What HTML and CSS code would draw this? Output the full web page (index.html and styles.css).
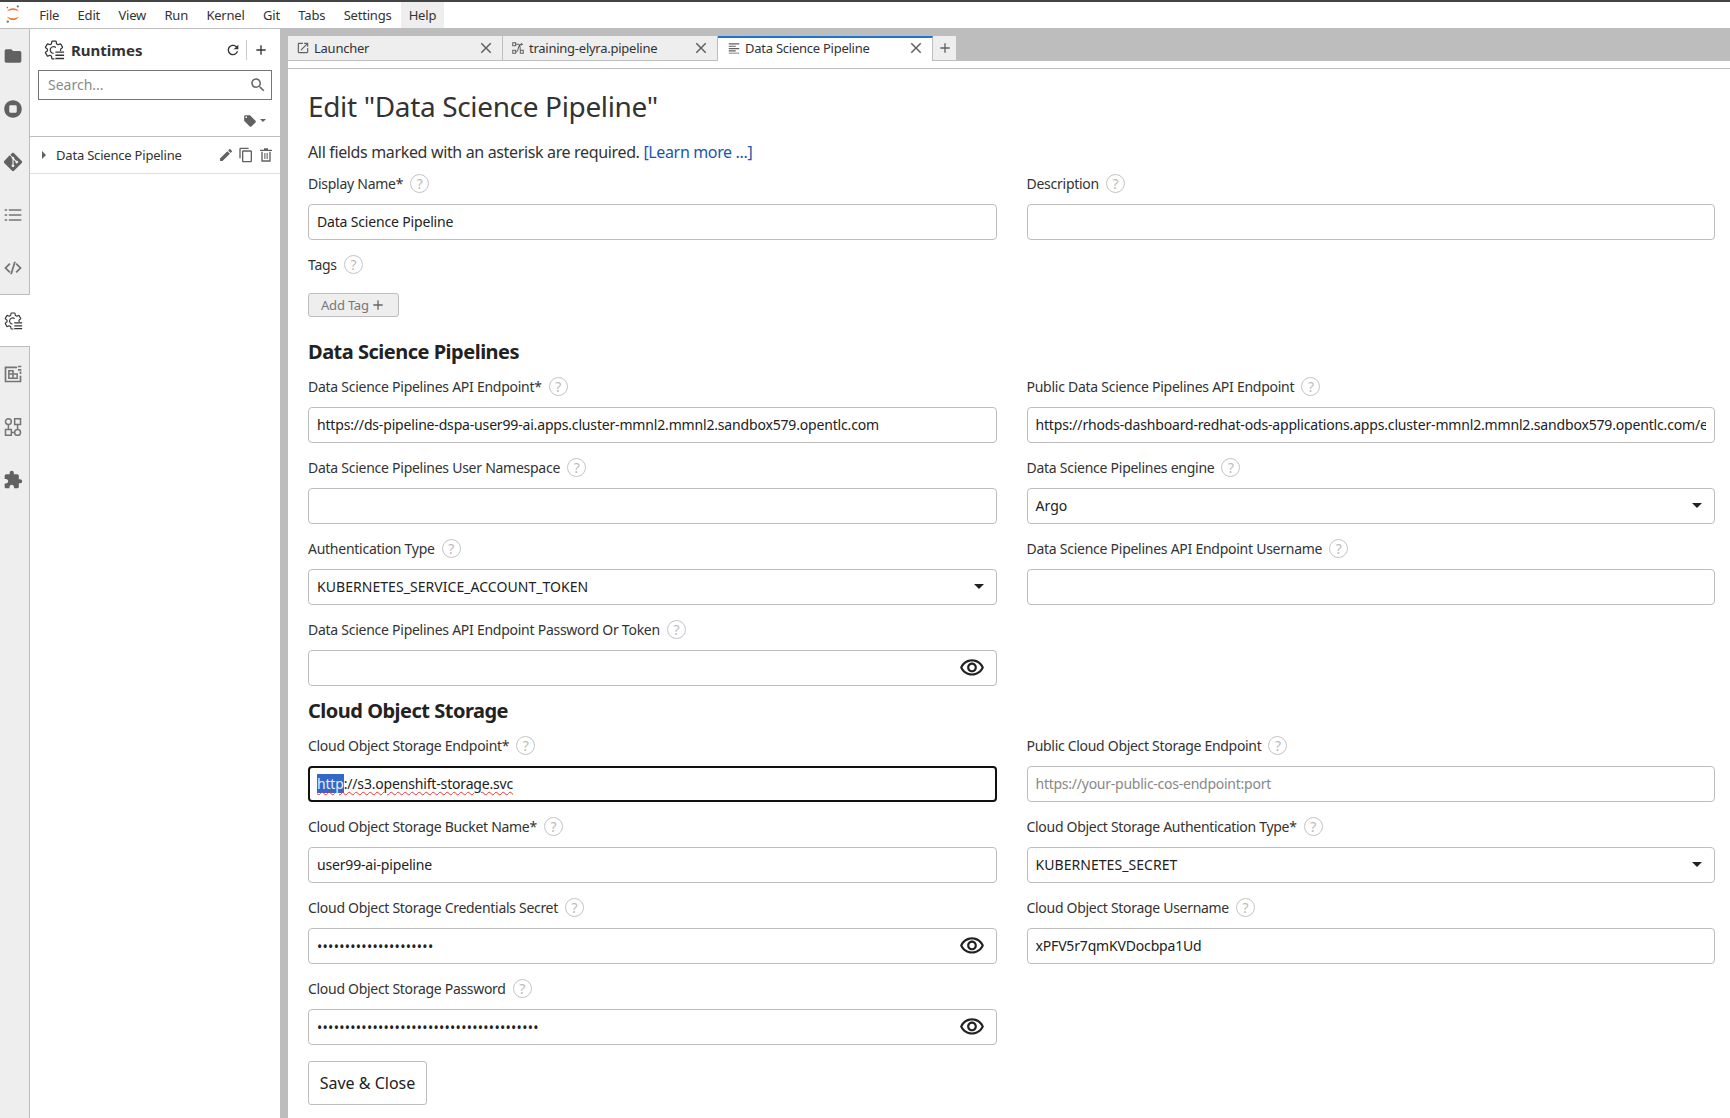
FILE: index.html
```html
<!DOCTYPE html>
<html lang="en">
<head>
<meta charset="utf-8">
<title>Edit Data Science Pipeline</title>
<link rel="stylesheet" href="styles.css">
</head>
<body>
<svg class="defs" width="0" height="0" aria-hidden="true">
  <symbol id="i-folder" viewBox="0 0 24 24"><path d="M10 4H4c-1.1 0-1.99.9-1.99 2L2 18c0 1.1.9 2 2 2h16c1.1 0 2-.9 2-2V8c0-1.1-.9-2-2-2h-8l-2-2z"/></symbol>
  <symbol id="i-stop" viewBox="0 0 24 24"><path fill-rule="evenodd" d="M12 1.500C6.200 1.500 1.500 6.200 1.500 12S6.200 22.500 12 22.500 22.500 17.800 22.500 12 17.800 1.500 12 1.500zM9 7.500h6c.8 0 1.500.7 1.500 1.500v6c0 .8-.7 1.500-1.500 1.500H9c-.8 0-1.500-.7-1.500-1.500V9c0-.8.7-1.500 1.500-1.500z"/></symbol>
  <symbol id="i-git" viewBox="0 0 24 24"><path fill-rule="evenodd" d="M22.500 10.800 13.200 1.500c-.66-.66-1.740-.66-2.400 0L8.900 3.400l2.500 2.500c.6-.2 1.300-.05 1.750.4.480.48.620 1.170.400 1.770l2.400 2.400c.6-.2 1.300-.07 1.770.4.660.66.660 1.720 0 2.380-.660.660-1.720.660-2.380 0-.5-.5-.62-1.230-.370-1.840l-2.250-2.250v5.900c.16.080.310.190.450.320.660.660.660 1.720 0 2.380-.660.660-1.720.660-2.380 0-.660-.660-.660-1.720 0-2.380.160-.160.350-.290.550-.370V8.500c-.2-.080-.390-.210-.550-.370-.5-.5-.620-1.240-.360-1.850L7.950 3.800 1.500 10.800c-.66.660-.66 1.740 0 2.400l9.300 9.300c.66.66 1.740.66 2.400 0l9.300-9.300c.66-.66.66-1.740 0-2.400z"/></symbol>
  <symbol id="i-list" viewBox="0 0 24 24"><path d="M7 5h15v2H7zM7 11h15v2H7zM7 17h15v2H7zM2 5h3v2H2zM2 11h3v2H2zM2 17h3v2H2z"/></symbol>
  <symbol id="i-code" viewBox="0 0 24 24"><path d="M7.500 6 1.500 12l6 6 1.500-1.500L4.500 12 9 7.500zM16.500 6 15 7.500l4.500 4.500-4.500 4.500 1.500 1.500 6-6zM13.200 4.500l-4.600 15h2.200l4.600-15z"/></symbol>
  <symbol id="i-runtime" viewBox="0 0 24 24"><path fill="none" stroke="currentColor" stroke-width="1.300" stroke-linejoin="round" d="M19.140 12.940c.04-.3.060-.61.060-.94 0-.32-.02-.64-.07-.94l2.030-1.580c.18-.14.230-.41.120-.61l-1.920-3.320c-.12-.22-.37-.29-.59-.22l-2.390.96c-.5-.38-1.030-.7-1.620-.94l-.36-2.540c-.04-.24-.24-.41-.48-.41h-3.840c-.24 0-.43.170-.47.410l-.36 2.540c-.59.240-1.130.570-1.620.940l-2.390-.96c-.22-.08-.47 0-.59.220L2.740 8.870c-.12.210-.08.470.12.610l2.030 1.580c-.05.3-.09.630-.09.940s.02.640.07.940l-2.030 1.580c-.18.140-.23.410-.12.610l1.920 3.320c.12.220.37.290.59.220l2.390-.96c.5.380 1.030.7 1.620.94l.36 2.540c.05.240.24.410.48.410h3.840c.24 0 .44-.17.47-.41l.36-2.540c.59-.24 1.130-.56 1.620-.94l2.390.96c.22.080.47 0 .59-.22l1.920-3.320c.12-.22.070-.47-.12-.61l-2.010-1.580z"/><path fill="#fff" d="M12.500 13h12v11h-12z"/><path fill="none" stroke="currentColor" stroke-width="1.300" d="M14 9.200a3.700 3.700 0 1 0-2.500 6.500"/><path d="M13.500 13.500H23v1.500h-9.500zM13.500 17H23v1.500h-9.500zM13.500 20.500H23V22h-9.500z"/></symbol>
  <symbol id="i-snippet" viewBox="0 0 24 24"><path d="M2 3h15v2H4v15h16v-6h2v8H2zM18 2h4v2h-4zM18 6h4v2h-4zM20 9h2v3h-2z"/><path fill="none" stroke="currentColor" stroke-width="1.800" d="M7 8h5v4H7zM7 12h5v5H7zM12 12h5v5h-5z"/></symbol>
  <symbol id="i-graph" viewBox="0 0 24 24"><g fill="none" stroke="currentColor" stroke-width="1.800"><circle cx="6.500" cy="5.500" r="3.500"/><path d="M14 2h7v7h-7zM3 15h7v7H3zM6.500 9v6M17.500 9v6M10 18.500h4"/><circle cx="17.500" cy="18.500" r="3.500"/></g></symbol>
  <symbol id="i-puzzle" viewBox="0 0 24 24"><path d="M20.500 11H19V7c0-1.100-.9-2-2-2h-4V3.500C13 2.120 11.880 1 10.500 1S8 2.120 8 3.500V5H4c-1.100 0-1.990.9-1.990 2v3.800H3.500c1.490 0 2.700 1.210 2.700 2.700s-1.210 2.700-2.700 2.700H2V20c0 1.100.9 2 2 2h3.800v-1.500c0-1.490 1.210-2.700 2.700-2.700 1.490 0 2.700 1.210 2.700 2.700V22H17c1.100 0 2-.9 2-2v-4h1.500c1.380 0 2.500-1.120 2.500-2.500S21.880 11 20.500 11z"/></symbol>
  <symbol id="i-refresh" viewBox="0 0 24 24"><path d="M17.650 6.350C16.200 4.900 14.210 4 12 4c-4.420 0-7.990 3.580-7.990 8s3.570 8 7.990 8c3.730 0 6.840-2.550 7.730-6h-2.080c-.82 2.330-3.040 4-5.650 4-3.310 0-6-2.690-6-6s2.690-6 6-6c1.660 0 3.140.69 4.220 1.780L13 11h7V4l-2.350 2.350z"/></symbol>
  <symbol id="i-plus" viewBox="0 0 24 24"><path d="M19 13h-6v6h-2v-6H5v-2h6V5h2v6h6v2z"/></symbol>
  <symbol id="i-search" viewBox="0 0 24 24"><path d="M15.500 14h-.79l-.28-.27C15.410 12.590 16 11.110 16 9.500 16 5.910 13.090 3 9.500 3S3 5.910 3 9.500 5.910 16 9.500 16c1.610 0 3.090-.59 4.230-1.570l.27.28v.79l5 4.990L20.490 19l-4.990-5zm-6 0C7.010 14 5 11.990 5 9.500S7.010 5 9.500 5 14 7.010 14 9.500 11.990 14 9.500 14z"/></symbol>
  <symbol id="i-tag" viewBox="0 0 24 24"><path d="M21.410 11.580l-9-9C12.050 2.220 11.550 2 11 2H4c-1.100 0-2 .9-2 2v7c0 .55.22 1.050.59 1.420l9 9c.36.36.86.58 1.410.58.55 0 1.050-.22 1.410-.59l7-7c.37-.36.59-.86.59-1.410 0-.55-.23-1.060-.59-1.420zM5.500 7C4.670 7 4 6.330 4 5.500S4.670 4 5.500 4 7 4.670 7 5.500 6.330 7 5.500 7z"/></symbol>
  <symbol id="i-pencil" viewBox="0 0 24 24"><path d="M3 17.250V21h3.750L17.810 9.940l-3.750-3.750L3 17.250zM20.710 7.040c.39-.39.39-1.020 0-1.410l-2.340-2.340c-.39-.39-1.020-.39-1.410 0l-1.830 1.830 3.750 3.750 1.830-1.830z"/></symbol>
  <symbol id="i-copy" viewBox="0 0 24 24"><path d="M16 1H4c-1.100 0-2 .9-2 2v14h2V3h12V1zm3 4H8c-1.100 0-2 .9-2 2v14c0 1.100.9 2 2 2h11c1.100 0 2-.9 2-2V7c0-1.100-.9-2-2-2zm0 16H8V7h11v14z"/></symbol>
  <symbol id="i-trash" viewBox="0 0 24 24"><path d="M9 2h6v2h6v2H3V4h6zM5 7h2v13h10V7h2v15H5zM9.500 9h1.600v9H9.500zM12.900 9h1.600v9h-1.600z"/></symbol>
  <symbol id="i-eye" viewBox="0 0 24 24"><path d="M12 6c3.790 0 7.170 2.130 8.820 5.500C19.170 14.870 15.790 17 12 17s-7.170-2.130-8.820-5.500C4.830 8.130 8.210 6 12 6m0-2C7 4 2.730 7.110 1 11.500 2.730 15.890 7 19 12 19s9.270-3.110 11-7.500C21.270 7.110 17 4 12 4zm0 5c1.380 0 2.500 1.120 2.500 2.500S13.380 14 12 14s-2.500-1.120-2.500-2.500S10.620 9 12 9m0-2c-2.480 0-4.500 2.020-4.500 4.500S9.520 16 12 16s4.500-2.020 4.500-4.500S14.480 7 12 7z"/></symbol>
  <symbol id="i-launch" viewBox="0 0 24 24"><path d="M19 19H5V5h7V3H5c-1.110 0-2 .9-2 2v14c0 1.100.89 2 2 2h14c1.100 0 2-.9 2-2v-7h-2v7zM14 3v2h3.590l-9.830 9.830 1.410 1.410L19 6.410V10h2V3h-7z"/></symbol>
  <symbol id="i-pipeline" viewBox="0 0 24 24"><path fill="none" stroke="currentColor" stroke-width="1.800" d="M3 3h5v5H3zM16 16h5v5h-5zM3 16h5v5H3zM8 5.500h5c3 0 3 13 3 13M8 18.500h2c2 0 2-5 3-8s3-5 5-5"/><path d="M17 3l4 2.500L17 8z"/></symbol>
  <symbol id="i-text" viewBox="0 0 24 24"><path d="M3 4h18v2H3zM3 8h12v2H3zM3 12h18v2H3zM3 16h12v2H3zM3 20h18v1.500H3z"/></symbol>
  <symbol id="i-close" viewBox="0 0 24 24"><path d="M19 6.410 17.590 5 12 10.590 6.410 5 5 6.410 10.590 12 5 17.590 6.410 19 12 13.410 17.590 19 19 17.590 13.410 12z"/></symbol>
</svg>

<nav class="menubar">
  <svg class="logo" viewBox="0 0 20 24" aria-hidden="true">
    <path fill="#f37726" d="M2.500 9C5.500 3.500 14.500 3.500 17.500 9 13.500 6.500 6.500 6.500 2.500 9zM2.500 15C5.500 21 14.500 21 17.500 15 13.500 18 6.500 18 2.500 15z"/>
    <circle cx="16" cy="2.500" r="1.400" fill="#767677"/><circle cx="3" cy="4" r="1" fill="#767677"/><circle cx="3.500" cy="21.500" r="1.500" fill="#767677"/>
  </svg>
  <span class="menu-item">File</span><span class="menu-item">Edit</span><span class="menu-item">View</span><span class="menu-item">Run</span><span class="menu-item">Kernel</span><span class="menu-item">Git</span><span class="menu-item">Tabs</span><span class="menu-item">Settings</span><span class="menu-item is-open">Help</span>
</nav>

<div class="workspace">
  <aside class="rail">
    <div class="rail-tab"><svg class="rail-icon"><use href="#i-folder"/></svg></div>
    <div class="rail-tab"><svg class="rail-icon"><use href="#i-stop"/></svg></div>
    <div class="rail-tab"><svg class="rail-icon"><use href="#i-git"/></svg></div>
    <div class="rail-tab"><svg class="rail-icon rail-icon-light"><use href="#i-list"/></svg></div>
    <div class="rail-tab"><svg class="rail-icon rail-icon-light"><use href="#i-code"/></svg></div>
    <div class="rail-tab is-active"><svg class="rail-icon"><use href="#i-runtime"/></svg></div>
    <div class="rail-tab"><svg class="rail-icon rail-icon-light"><use href="#i-snippet"/></svg></div>
    <div class="rail-tab"><svg class="rail-icon rail-icon-light"><use href="#i-graph"/></svg></div>
    <div class="rail-tab"><svg class="rail-icon"><use href="#i-puzzle"/></svg></div>
    <div class="rail-fill"></div>
  </aside>

  <section class="panel">
    <header class="panel-head">
      <svg class="panel-logo"><use href="#i-runtime"/></svg>
      <h2 class="panel-title">Runtimes</h2>
      <svg class="tool"><use href="#i-refresh"/></svg>
      <span class="tool-sep"></span>
      <svg class="tool"><use href="#i-plus"/></svg>
    </header>
    <div class="search">
      <span class="search-text">Search...</span>
      <svg class="search-icon"><use href="#i-search"/></svg>
    </div>
    <div class="tag-row">
      <svg class="tag-icon"><use href="#i-tag"/></svg>
      <span class="tag-caret"></span>
    </div>
    <div class="runtime-row">
      <span class="row-caret"></span>
      <span class="row-name">Data Science Pipeline</span>
      <svg class="row-icon row-pencil"><use href="#i-pencil"/></svg>
      <svg class="row-icon"><use href="#i-copy"/></svg>
      <svg class="row-icon"><use href="#i-trash"/></svg>
    </div>
  </section>

  <main class="main">
    <div class="tabbar">
      <div class="tab">
        <svg class="tab-icon"><use href="#i-launch"/></svg><span class="tab-label">Launcher</span>
        <svg class="tab-close"><use href="#i-close"/></svg>
      </div>
      <div class="tab">
        <svg class="tab-icon"><use href="#i-pipeline"/></svg><span class="tab-label">training-elyra.pipeline</span>
        <svg class="tab-close"><use href="#i-close"/></svg>
      </div>
      <div class="tab is-current">
        <svg class="tab-icon"><use href="#i-text"/></svg><span class="tab-label">Data Science Pipeline</span>
        <svg class="tab-close"><use href="#i-close"/></svg>
      </div>
      <div class="tab-add"><svg class="tab-plus"><use href="#i-plus"/></svg></div>
    </div>
    <div class="tab-rule"></div>

    <form class="editor">
      <h1 class="editor-title">Edit "Data Science Pipeline"</h1>
      <p class="editor-note">All fields marked with an asterisk are required. <a class="learn" href="#">[Learn more ...]</a></p>

      <div class="grid grid-first">
        <div class="field">
          <div class="label"><span>Display Name*</span><span class="help">?</span></div>
          <input class="input" value="Data Science Pipeline">
        </div>
        <div class="field">
          <div class="label"><span>Description</span><span class="help">?</span></div>
          <input class="input">
        </div>
        <div class="field field-wide">
          <div class="label"><span>Tags</span><span class="help">?</span></div>
          <button type="button" class="add-tag">Add Tag <svg class="add-plus"><use href="#i-plus"/></svg></button>
        </div>
      </div>

      <h3 class="section-title">Data Science Pipelines</h3>
      <div class="grid">
        <div class="field">
          <div class="label"><span>Data Science Pipelines API Endpoint*</span><span class="help">?</span></div>
          <input class="input" value="https://ds-pipeline-dspa-user99-ai.apps.cluster-mmnl2.mmnl2.sandbox579.opentlc.com">
        </div>
        <div class="field">
          <div class="label"><span>Public Data Science Pipelines API Endpoint</span><span class="help">?</span></div>
          <input class="input" value="https://rhods-dashboard-redhat-ods-applications.apps.cluster-mmnl2.mmnl2.sandbox579.opentlc.com/experiments">
        </div>
        <div class="field">
          <div class="label"><span>Data Science Pipelines User Namespace</span><span class="help">?</span></div>
          <input class="input">
        </div>
        <div class="field">
          <div class="label"><span>Data Science Pipelines engine</span><span class="help">?</span></div>
          <div class="select"><span>Argo</span><span class="select-caret"></span></div>
        </div>
        <div class="field">
          <div class="label"><span>Authentication Type</span><span class="help">?</span></div>
          <div class="select"><span>KUBERNETES_SERVICE_ACCOUNT_TOKEN</span><span class="select-caret"></span></div>
        </div>
        <div class="field">
          <div class="label"><span>Data Science Pipelines API Endpoint Username</span><span class="help">?</span></div>
          <input class="input">
        </div>
        <div class="field">
          <div class="label"><span>Data Science Pipelines API Endpoint Password Or Token</span><span class="help">?</span></div>
          <div class="secret"><input class="secret-input" type="password"><svg class="eye"><use href="#i-eye"/></svg></div>
        </div>
      </div>

      <h3 class="section-title section-title-tight">Cloud Object Storage</h3>
      <div class="grid grid-cos">
        <div class="field">
          <div class="label"><span>Cloud Object Storage Endpoint*</span><span class="help">?</span></div>
          <div class="focused"><span class="spell"><span class="selected">http</span>://s3.openshift-storage.svc</span></div>
        </div>
        <div class="field">
          <div class="label"><span>Public Cloud Object Storage Endpoint</span><span class="help">?</span></div>
          <input class="input" placeholder="https://your-public-cos-endpoint:port">
        </div>
        <div class="field">
          <div class="label"><span>Cloud Object Storage Bucket Name*</span><span class="help">?</span></div>
          <input class="input" value="user99-ai-pipeline">
        </div>
        <div class="field">
          <div class="label"><span>Cloud Object Storage Authentication Type*</span><span class="help">?</span></div>
          <div class="select"><span>KUBERNETES_SECRET</span><span class="select-caret"></span></div>
        </div>
        <div class="field">
          <div class="label"><span>Cloud Object Storage Credentials Secret</span><span class="help">?</span></div>
          <div class="secret"><input class="secret-input" type="password" value="xxxxxxxxxxxxxxxxxxxxx"><svg class="eye"><use href="#i-eye"/></svg></div>
        </div>
        <div class="field">
          <div class="label"><span>Cloud Object Storage Username</span><span class="help">?</span></div>
          <input class="input" value="xPFV5r7qmKVDocbpa1Ud">
        </div>
        <div class="field">
          <div class="label"><span>Cloud Object Storage Password</span><span class="help">?</span></div>
          <div class="secret"><input class="secret-input" type="password" value="xxxxxxxxxxxxxxxxxxxxxxxxxxxxxxxxxxxxxxxx"><svg class="eye"><use href="#i-eye"/></svg></div>
        </div>
      </div>

      <button type="button" class="save">Save &amp; Close</button>
    </form>
  </main>
</div>
</body>
</html>
```

FILE: styles.css
```css
* { box-sizing: border-box; }
html, body { margin: 0; height: 100%; }
body {
  height: 1118px;
  overflow: hidden;
  display: flex;
  flex-direction: column;
  font-family: "Noto Sans", "Liberation Sans", sans-serif;
  color: #222;
  background: #fff;
  border-top: 2px solid #444;
}
.defs { display: block; height: 0; }
svg { fill: currentColor; }

/* menu */
.menubar {
  flex: none;
  height: 27px;
  display: flex;
  align-items: stretch;
  border-bottom: 1px solid #bdbdbd;
  font-size: 13px;
  letter-spacing: -.2px;
  color: #333;
  background: #fff;
}
.logo { flex: none; margin: 1px 9px 0 5px; width: 16px; height: 22px; }
.menu-item { padding: 0 9.2px; line-height: 27px; }
.menu-item.is-open { background: #eee; padding: 0 8px; }

.workspace { flex: 1; min-height: 0; display: flex; background: #bdbdbd; }

/* rail */
.rail {
  flex: none;
  width: 30px;
  display: flex;
  flex-direction: column;
  background: #eee;
}
.rail-tab {
  height: 53px;
  display: flex;
  align-items: center;
  justify-content: center;
  border-right: 1px solid #bdbdbd;
  color: #616161;
  padding-right: 3px;
}
.rail-tab.is-active {
  background: #fff;
  border-right: 0;
  border-top: 1px solid #bdbdbd;
  border-bottom: 1px solid #bdbdbd;
  color: #333;
  padding-right: 4px;
}
.rail-fill { flex: 1; border-right: 1px solid #bdbdbd; }
.rail-icon { width: 20px; height: 20px; }
.rail-icon-light { color: #757575; }

/* side panel */
.panel { flex: none; width: 250px; background: #fff; margin-right: 8px; }
.panel-head {
  height: 41px;
  display: flex;
  align-items: center;
  padding: 0 11px 0 13px;
  color: #333;
}
.panel-logo { width: 22px; height: 22px; margin-right: 6px; }
.panel-title { flex: 1; margin: 0; font-size: 15px; font-weight: 700; }
.tool { width: 16px; height: 16px; color: #333; }
.tool-sep { width: 1px; height: 20px; background: #ccc; margin: 0 6px 0 5px; }
.search {
  height: 30px;
  margin: 0 8px;
  padding: 0 4px 1px 9px;
  display: flex;
  align-items: center;
  justify-content: space-between;
  border: 1px solid #757575;
}
.search-text { font-size: 14px; color: #8a8a8a; }
.search-icon { width: 18px; height: 18px; color: #666; }
.tag-row {
  height: 37px;
  display: flex;
  align-items: center;
  justify-content: flex-end;
  padding: 5px 14px 0 0;
  border-bottom: 1px solid #bdbdbd;
  color: #616161;
}
.tag-icon { width: 14px; height: 14px; margin-right: 3px; }
.tag-caret { border: 3px solid transparent; border-top: 3px solid #616161; margin-top: 3px; }
.runtime-row {
  height: 37px;
  display: flex;
  align-items: center;
  padding: 0 6px 0 12px;
  border-bottom: 1px solid #ddd;
}
.row-caret {
  border: 4px solid transparent;
  border-left: 4px solid #616161;
  border-right: 0;
  margin-right: 10px;
}
.row-name { flex: 1; font-size: 13px; letter-spacing: -.2px; color: #333; }
.row-icon { width: 16px; height: 16px; margin-left: 4px; color: #616161; }
.row-pencil { color: #616161; }

/* main */
.main { flex: 1; min-width: 0; display: flex; flex-direction: column; background: #fff; }
.tabbar {
  flex: none;
  height: 32px;
  padding-top: 7px;
  display: flex;
  align-items: flex-start;
  background: #bdbdbd;
}
.tab {
  width: 215px;
  height: 25px;
  display: flex;
  align-items: center;
  padding: 0 7px 0 8px;
  background: #eee;
  border-right: 1px solid #bdbdbd;
  border-bottom: 1px solid #bdbdbd;
  font-size: 13px;
  letter-spacing: -.25px;
  color: #333;
}
.tab.is-current {
  background: #fff;
  border-top: 2px solid #1976d2;
  border-bottom: 0;
  padding: 0 7px 4px 9px;
  height: 25px;
}
.tab-icon { flex: none; width: 14px; height: 14px; margin-right: 4px; color: #616161; }
.tab-label { flex: 1; white-space: nowrap; }
.tab-close { flex: none; width: 18px; height: 18px; color: #616161; }
.tab-add {
  width: 24px;
  height: 25px;
  display: flex;
  align-items: center;
  justify-content: center;
  background: #eee;
  border-bottom: 1px solid #bdbdbd;
  border-right: 1px solid #bdbdbd;
}
.tab-plus { width: 16px; height: 16px; color: #616161; }
.tab-rule { flex: none; height: 8px; border-bottom: 1px solid #bdbdbd; }

/* form */
.editor { flex: 1; padding: 0 15px 0 20px; }
.editor-title { margin: 17px 0 0; font-size: 28px; line-height: 40px; font-weight: 400; letter-spacing: -.35px; color: #333; }
.editor-note { margin: 14px 0 0; font-size: 16px; line-height: 24px; letter-spacing: -.35px; color: #333; }
.learn { color: #1a56b0; text-decoration: none; }
.grid { display: grid; grid-template-columns: 1fr 1fr; column-gap: 30px; margin-top: 10px; }
.grid-first { margin-top: 7px; }
.grid-cos { margin-top: 10px; }
.grid-cos .label { letter-spacing: -.3px; }
.field { height: 81px; }
.field-wide { grid-column: 1 / -1; height: 88px; }
.label {
  height: 24px;
  margin-bottom: 9px;
  display: flex;
  align-items: center;
  gap: 7px;
  font-size: 14px;
  letter-spacing: -.26px;
  color: #333;
}
.help {
  width: 19px;
  height: 19px;
  display: flex;
  align-items: center;
  justify-content: center;
  border: 1px solid #c4c4c4;
  border-radius: 50%;
  font-size: 14px;
  color: #bbb;
}
.input, .select, .secret, .focused {
  display: flex;
  align-items: center;
  width: 100%;
  height: 36px;
  border: 1px solid #bdbdbd;
  border-radius: 4px;
  background: #fff;
  font-family: inherit;
  font-size: 14px;
  letter-spacing: -.17px;
  color: #222;
  padding: 0 8px 1px;
  outline: 0;
}
.input::placeholder { color: #888; opacity: 1; letter-spacing: -.25px; }
.select { justify-content: space-between; padding-right: 12px; letter-spacing: .05px; }
.select-caret { border: 5px solid transparent; border-top: 5px solid #222; border-bottom: 0; }
.secret { padding: 0 11px 0 8px; }
.secret-input {
  flex: 1;
  min-width: 0;
  border: 0;
  outline: 0;
  padding: 0;
  font-family: inherit;
  font-size: 14px;
  letter-spacing: .28px;
  color: #222;
  background: transparent;
}
.eye { flex: none; width: 26px; height: 26px; color: #222; }
.focused { border: 2px solid #111; padding-left: 7px; }
.spell { text-decoration: underline wavy #e33 1px; text-underline-offset: 2px; }
.selected { background: #3367c9; color: #e8eefb; }
.add-tag {
  display: flex;
  align-items: center;
  gap: 1px;
  width: 91px;
  height: 24px;
  padding: 0 0 0 12px;
  margin-top: 17px;
  border: 1px solid #bdbdbd;
  border-radius: 3px;
  background: #eee;
  font-family: inherit;
  font-size: 13px;
  letter-spacing: -.2px;
  color: #777;
}
.add-plus { width: 16px; height: 16px; color: #666; }
.section-title { margin: 0; font-size: 20px; line-height: 24px; font-weight: 700; letter-spacing: -.5px; color: #222; }
.section-title-tight { margin-top: 1px; }
.save {
  display: block;
  width: 119px;
  height: 44px;
  margin-top: 4px;
  border: 1px solid #bdbdbd;
  border-radius: 3px;
  background: #fff;
  font-family: inherit;
  font-size: 16px;
  color: #222;
}
```
